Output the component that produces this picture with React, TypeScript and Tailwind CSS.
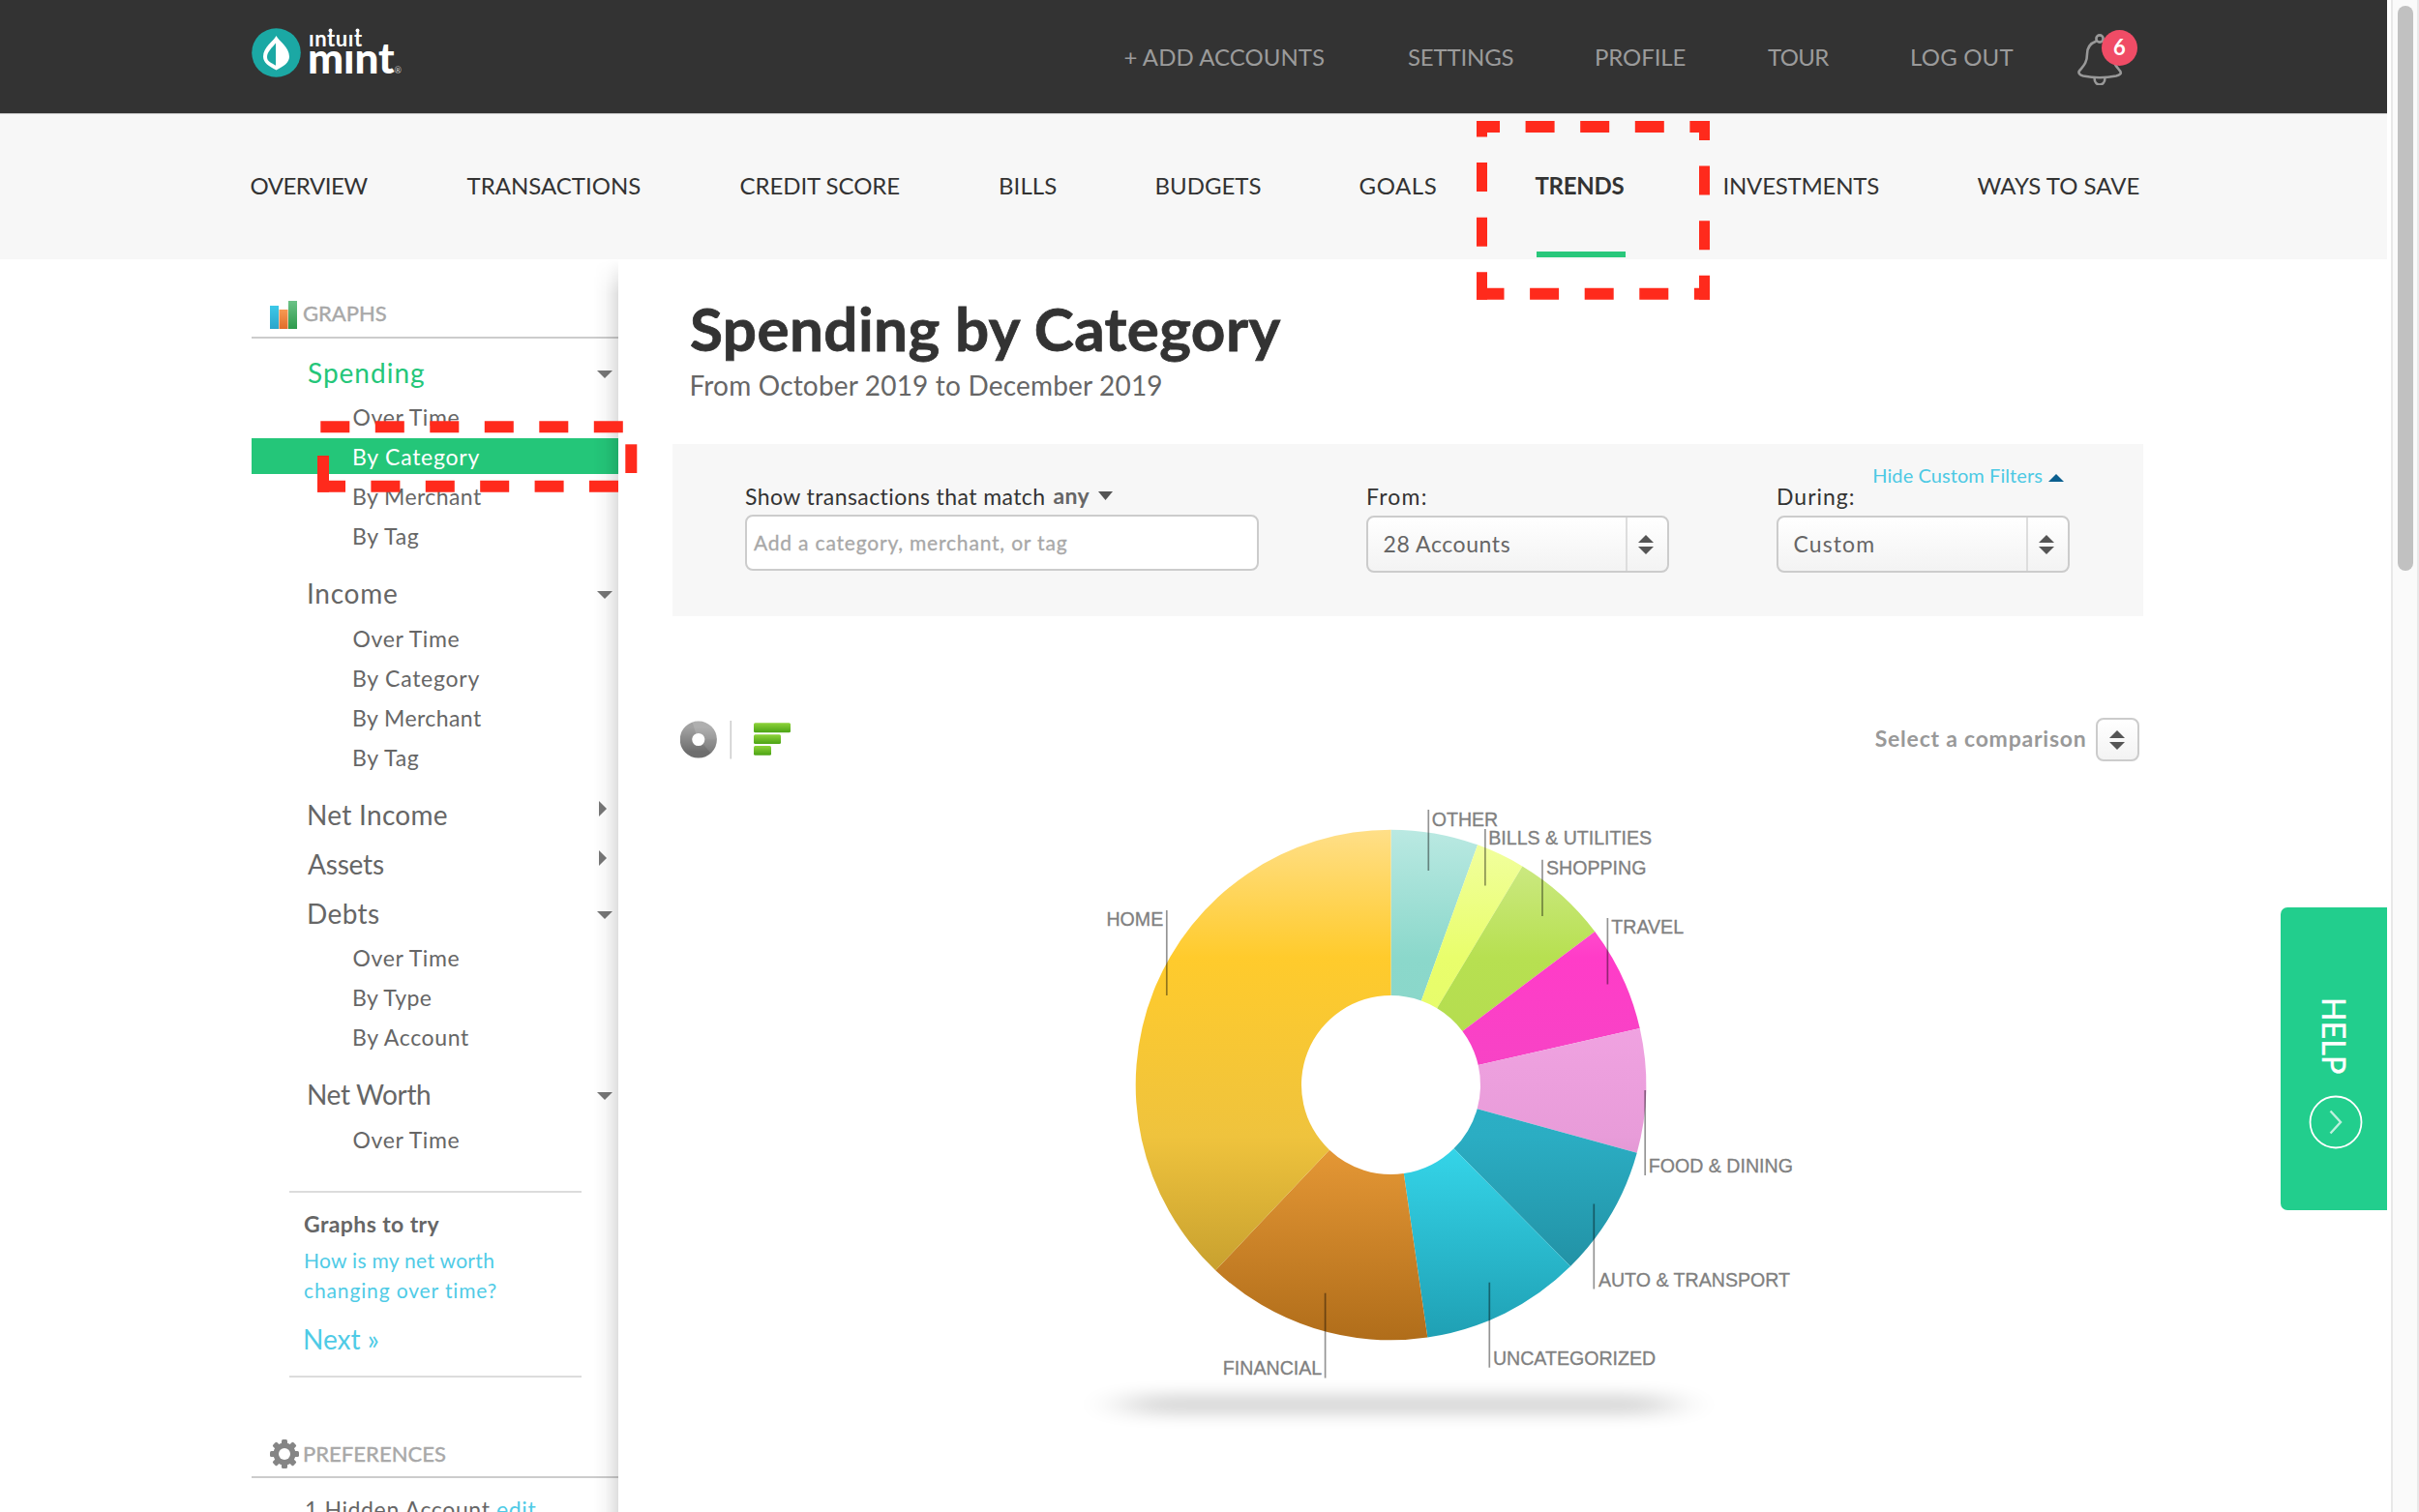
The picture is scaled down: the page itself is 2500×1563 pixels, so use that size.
interface NavItem {
  label: string
  className: string
}

interface SidebarItem {
  label: string
  className: string
  active?: boolean
}

interface SidebarGroup {
  label: string
  className: string
  open: boolean
  active?: boolean
  items: SidebarItem[]
}

interface Slice {
  label: string
  from: number
  to: number
  stops: [string, string, string, string]
  line: [number, number, number]
  text: [number, number]
  anchor: 'start' | 'end'
}

const topLinks: NavItem[] = [
  { label: '+ ADD ACCOUNTS', className: 'w-[293.5px] tracking-[0.05px]' },
  { label: 'SETTINGS', className: 'w-[193px] tracking-[-0.19px]' },
  { label: 'PROFILE', className: 'w-[179px] tracking-[-0.1px]' },
  { label: 'TOUR', className: 'w-[147px] tracking-[-0.7px]' },
  { label: 'LOG OUT', className: 'w-[172px] tracking-[0.2px]' },
]

const tabs: NavItem[] = [
  { label: 'OVERVIEW', className: 'w-[224px] tracking-[-0.5px]' },
  { label: 'TRANSACTIONS', className: 'w-[282px]' },
  { label: 'CREDIT SCORE', className: 'w-[267.5px] tracking-[-0.06px]' },
  { label: 'BILLS', className: 'w-[161.5px] tracking-[0.1px]' },
  { label: 'BUDGETS', className: 'w-[211px]' },
  { label: 'GOALS', className: 'w-[182px] tracking-[0.6px]' },
  { label: 'TRENDS', className: 'w-[194px] tracking-[-0.3px] font-bold' },
  { label: 'INVESTMENTS', className: 'w-[263px] tracking-[-0.22px]' },
  { label: 'WAYS TO SAVE', className: 'w-[168px]' },
]

const overTime: SidebarItem = { label: 'Over Time', className: 'tracking-[0.62px] pl-[104.5px]' }
const byCategory: SidebarItem = { label: 'By Category', className: 'tracking-[0.75px] pl-[104px]' }
const byMerchant: SidebarItem = { label: 'By Merchant', className: 'tracking-[0.42px] pl-[104px]' }
const byTag: SidebarItem = { label: 'By Tag', className: 'tracking-[0.66px] pl-[104px]' }

const groups: SidebarGroup[] = [
  {
    label: 'Spending',
    className: 'tracking-[1px] pl-[58px]',
    open: true,
    active: true,
    items: [overTime, { ...byCategory, active: true }, byMerchant, byTag],
  },
  { label: 'Income', className: 'tracking-[0.74px] pl-[57px]', open: true, items: [overTime, byCategory, byMerchant, byTag] },
  { label: 'Net Income', className: 'tracking-[0.3px] pl-[57px]', open: false, items: [] },
  { label: 'Assets', className: 'tracking-[-0.2px] pl-[58px]', open: false, items: [] },
  {
    label: 'Debts',
    className: 'tracking-[0.4px] pl-[57px]',
    open: true,
    items: [
      overTime,
      { label: 'By Type', className: 'tracking-[0.39px] pl-[104px]' },
      { label: 'By Account', className: 'tracking-[0.62px] pl-[104px]' },
    ],
  },
  { label: 'Net Worth', className: 'tracking-[-0.36px] pl-[57px]', open: true, items: [overTime] },
]

// Angles in degrees, clockwise from twelve o'clock. Stops sit at 0, 25, 60 and 100% of the height.
const slices: Slice[] = [
  { label: 'OTHER', from: 0, to: 19.85, stops: ['#bae9e2', '#8bd8cb', '#88d4c7', '#5f9a90'], line: [38.8, -284.5, -221.5], text: [42.2, -268], anchor: 'start' },
  { label: 'BILLS & UTILITIES', from: 19.85, to: 31, stops: ['#f2ffa4', '#e9fe6c', '#e3f868', '#a5b548'], line: [97.4, -264.5, -206], text: [100.8, -248.2], anchor: 'start' },
  { label: 'SHOPPING', from: 31, to: 53.05, stops: ['#d3ec93', '#b7e051', '#b2d94e', '#80a037'], line: [156.5, -232.8, -174.5], text: [160.5, -217.3], anchor: 'start' },
  { label: 'TRAVEL', from: 53.05, to: 77.2, stops: ['#ff80dc', '#ff3cc8', '#f248c4', '#b03090'], line: [223.9, -172.5, -104], text: [227.8, -156.5], anchor: 'start' },
  { label: 'FOOD & DINING', from: 77.2, to: 105.45, stops: ['#f8c4ee', '#f5a6e6', '#e89cd9', '#b074a4'], line: [262.7, 5.5, 93.5], text: [266.3, 90.5], anchor: 'start' },
  { label: 'AUTO & TRANSPORT', from: 105.45, to: 135.3, stops: ['#7accdb', '#30b6cd', '#2badc3', '#1d8395'], line: [209.8, 123, 211], text: [214.4, 208], anchor: 'start' },
  { label: 'UNCATEGORIZED', from: 135.3, to: 171.75, stops: ['#8aecf7', '#3ce2f6', '#36d8ec', '#1f9fb3'], line: [101.8, 204.2, 292.2], text: [105.4, 289], anchor: 'start' },
  { label: 'FINANCIAL', from: 171.75, to: 223.4, stops: ['#fac68a', '#f5a540', '#e89a37', '#b06d1a'], line: [-67.9, 215.2, 303], text: [-71.3, 299.8], anchor: 'end' },
  { label: 'HOME', from: 223.4, to: 360, stops: ['#ffdf88', '#ffcb2c', '#efc33d', '#b48f28'], line: [-231.7, -180.5, -92.5], text: [-235.3, -164.5], anchor: 'end' },
]

const OUTER = 263.8
const INNER = 92.5

function point(radius: number, angle: number): string {
  const rad = (angle * Math.PI) / 180
  return `${(radius * Math.sin(rad)).toFixed(2)} ${(-radius * Math.cos(rad)).toFixed(2)}`
}

function slicePath(from: number, to: number): string {
  return `M${point(OUTER, from)} A${OUTER} ${OUTER} 0 0 1 ${point(OUTER, to)} L${point(INNER, to)} A${INNER} ${INNER} 0 0 0 ${point(INNER, from)} Z`
}

function Logo() {
  return (
    <div className="mb-[9px] flex h-[56px] items-start text-white" aria-label="Intuit Mint">
      <svg width="51" height="51" viewBox="0 0 51 51" className="mt-[3px]">
        <circle cx="25.5" cy="25.5" r="25.3" fill="#1ba8a4" />
        <path d="M25.5 8 C28 13 39 20 39 29.5 C39 36 33 39.5 25.5 43.5 C18 39.5 12 36 12 29.5 C12 20 23 13 25.5 8Z" fill="#fff" />
        <path d="M25 15.5 C21.5 20 16 24.5 16 30 C16 34.5 20.5 36 25 38.7Z" fill="#1ba8a4" />
      </svg>
      <div className="relative ml-[7px] flex flex-col pt-[4px]">
        <span className="h-[20px] pl-[1px] text-[22px] leading-[20px] font-bold tracking-[0.6px]">ıntuıt</span>
        <span className="-mt-[9px] h-[36px] text-[44px] leading-[36px] font-black tracking-[-0.1px]">mınt</span>
        <svg width="60" height="6" viewBox="0 0 60 6" className="absolute top-[3px] left-0">
          <circle cx="23.5" cy="2.5" r="2" fill="#fff" />
          <circle cx="51.5" cy="2.5" r="2" fill="#fff" />
        </svg>
      </div>
      <span className="mt-[42px] text-[9px] leading-[10px] text-[#ccc]">®</span>
    </div>
  )
}

function Bell() {
  return (
    <div className="relative top-[1.5px] h-[56px] w-[64px]">
      <svg width="64" height="56" viewBox="0 0 64 56" fill="none" stroke="#999" strokeWidth="2.6" className="absolute inset-0">
        <circle cx="24" cy="8" r="3.6" />
        <path d="M20.5 10.5 C13.5 13 11 18 11 24 C11 34 6 37 2.5 42 C2 44.5 3.5 45.5 7 46.5 C17 48.5 31 48.5 41 46.5 C45 45.5 46.5 44 45.5 42 C42 37 37.5 34 37 24 C37 18 34.5 13 27.5 10.5" />
        <path d="M18.5 48 C18.5 58 29.5 58 29.5 48" />
      </svg>
      <span className="absolute top-[-1.5px] left-[26px] flex size-[37px] items-center justify-center rounded-full bg-[#f04c66] text-[22px] leading-none font-bold text-white">
        6
      </span>
    </div>
  )
}

function TopBar() {
  return (
    <header className="flex h-[118px] items-center justify-between border-b border-[#c8c8c8] bg-[#333] pr-[257px] pl-[260px]">
      <Logo />
      <nav className="flex items-center text-[24px] text-[#9b9b9b]">
        {topLinks.map((link) => (
          <a key={link.label} className={`pt-[1px] whitespace-nowrap ${link.className}`}>
            {link.label}
          </a>
        ))}
        <Bell />
      </nav>
    </header>
  )
}

function Tabs() {
  return (
    <nav className="flex h-[149.5px] items-center bg-[#f7f7f7] pl-[258.5px] text-[24px] text-[#333]">
      {tabs.map((tab) => (
        <a key={tab.label} className={`relative flex h-full items-center pb-[1px] whitespace-nowrap ${tab.className}`}>
          {tab.label}
          {tab.label === 'TRENDS' ? <span className="absolute bottom-[1.5px] left-[1.5px] h-[6px] w-[92px] bg-[#29c77b]" /> : null}
        </a>
      ))}
    </nav>
  )
}

function GroupArrow({ open }: { open: boolean }) {
  return open ? (
    <svg width="16" height="8" viewBox="0 0 16 8" className="mt-[4px] mr-[6px]">
      <path d="M0 0H16L8 8Z" fill="#777" />
    </svg>
  ) : (
    <svg width="8" height="16" viewBox="0 0 8 16" className="mr-[12px] mb-[11px]">
      <path d="M0 0V16L8 8Z" fill="#777" />
    </svg>
  )
}

function Sidebar() {
  return (
    <aside className="relative w-[379px] shrink-0">
      <div className="flex h-[82px] items-end border-b-2 border-[#ccc] pb-[8px] pl-[19px]">
        <svg width="28" height="30" viewBox="0 0 28 30">
          <defs>
            <linearGradient id="bar-blue" x1="0" y1="0" x2="0" y2="1">
              <stop stopColor="#3cc8e8" />
              <stop offset="1" stopColor="#2ba5cb" />
            </linearGradient>
            <linearGradient id="bar-orange" x1="0" y1="0" x2="0" y2="1">
              <stop stopColor="#f79a52" />
              <stop offset="1" stopColor="#e06d2b" />
            </linearGradient>
            <linearGradient id="bar-green" x1="0" y1="0" x2="0" y2="1">
              <stop stopColor="#6cc287" />
              <stop offset="1" stopColor="#2d9a4c" />
            </linearGradient>
          </defs>
          <rect x="0" y="6" width="9" height="24" fill="url(#bar-blue)" />
          <rect x="9.5" y="10" width="9" height="20" fill="url(#bar-orange)" />
          <rect x="19" y="1" width="9" height="29" fill="url(#bar-green)" />
        </svg>
        <h3 className="pl-[6px] text-[22px] leading-[32px] text-[#a8a8a8] [-webkit-text-stroke:0.4px_#a8a8a8]">GRAPHS</h3>
      </div>

      <div className="pt-[9.5px] text-[#666]">
        {groups.map((group) => (
          <section key={group.label}>
            <div className="flex h-[51px] items-center justify-between text-[28px]">
              <span className={`${group.className} ${group.active ? 'text-[#24c679]' : ''}`}>{group.label}</span>
              <GroupArrow open={group.open} />
            </div>
            {group.items.length > 0 ? (
              <ul className="pb-[13.5px] text-[23px]">
                {group.items.map((item) => (
                  <li key={item.label} className="flex h-[41px] items-center">
                    <span className={`h-[37px] w-full leading-[38px] ${item.className} ${item.active ? 'bg-[#24c679] text-white' : ''}`}>
                      {item.label}
                    </span>
                  </li>
                ))}
              </ul>
            ) : null}
          </section>
        ))}
      </div>

      <div className="mt-[20px] ml-[39px] w-[302px] border-y-2 border-[#dcdcdc] pt-[16px] pb-[18px] pl-[15px] whitespace-nowrap">
        <p className="text-[23px] leading-[32px] font-bold tracking-[0.4px] text-[#666]">Graphs to try</p>
        <p className="mt-[6px] text-[21px] leading-[31px] text-[#4fcbe6]">
          <span className="block tracking-[0.3px]">How is my net worth</span>
          <span className="block tracking-[0.87px]">changing over time?</span>
        </p>
        <p className="mt-[15px] -ml-[1px] text-[28px] leading-[40px] text-[#4fcbe6]">Next »</p>
      </div>

      <div className="mt-[22px] flex h-[82px] items-end border-b-2 border-[#ccc] pb-[7px] pl-[19px]">
        <svg width="30" height="32" viewBox="-15 -16 30 32" fill="#858585">
          {[0, 45, 90, 135].map((angle) => (
            <rect key={angle} x="-3" y="-15" width="6" height="30" rx="1.5" transform={`rotate(${angle})`} />
          ))}
          <circle r="11.5" />
          <circle r="6" fill="#fff" />
        </svg>
        <h3 className="pl-[4px] text-[22px] leading-[33px] tracking-[0.05px] text-[#a8a8a8] [-webkit-text-stroke:0.4px_#a8a8a8]">PREFERENCES</h3>
      </div>
      <p className="mt-[12px] pl-[55px] text-[23px] leading-[40px] tracking-[0.62px] whitespace-nowrap text-[#666]">
        1 Hidden Account <span className="text-[#4fcbe6]">edit</span>
      </p>

      {/* Shadow that the content panel throws on the sidebar */}
      <div className="pointer-events-none absolute top-0 right-0 h-full w-[26px] bg-gradient-to-r from-transparent via-black/3 to-black/13 [mask-image:linear-gradient(to_bottom,transparent,black_36px)]" />
    </aside>
  )
}

function Stepper() {
  return (
    <svg width="16" height="20" viewBox="0 0 16 20" fill="#555">
      <path d="M8 0L16 8H0Z" />
      <path d="M0 12H16L8 20Z" />
    </svg>
  )
}

function Select({ value, className }: { value: string; className: string }) {
  return (
    <div className={`mt-[4.5px] flex h-[59px] items-stretch rounded-[8px] border-2 border-[#ccc] bg-gradient-to-b from-white to-[#f3f3f3] ${className}`}>
      <span className="flex flex-1 items-center pb-[2px] pl-[15.5px] text-[23px] text-[#666]">{value}</span>
      <span className="flex w-[43px] items-center justify-center border-l-2 border-[#ddd] pr-[3px]">
        <Stepper />
      </span>
    </div>
  )
}

function Filters() {
  return (
    <section className="relative mt-[41.5px] flex h-[178px] w-[1520px] bg-[#f7f7f7] pt-[37.5px] pl-[75px] text-[23px] leading-[32px] text-[#333]">
      <div className="w-[531px]">
        <div className="flex h-[32px] items-center">
          <span className="tracking-[0.42px]">Show transactions that match</span>
          <span className="mb-[2px] ml-[8px] font-bold tracking-[0.4px] text-[#666]">any</span>
          <svg width="15" height="9" viewBox="0 0 15 9" className="ml-[9px]">
            <path d="M0 0H15L7.5 9Z" fill="#555" />
          </svg>
        </div>
        <div className="mt-[3px] flex h-[58px] items-center rounded-[8px] border-2 border-[#ccc] bg-white pl-[7px] text-[21px] tracking-[0.81px] text-[#a8a8a8] [-webkit-text-stroke:0.3px_#a8a8a8]">
          Add a category, merchant, or tag
        </div>
      </div>
      <div className="ml-[111px]">
        <span className="block tracking-[1.2px]">From:</span>
        <Select value="28 Accounts" className="w-[313px] tracking-[0.58px]" />
      </div>
      <div className="ml-[111px]">
        <span className="block tracking-[1px]">During:</span>
        <Select value="Custom" className="w-[303px] tracking-[1.1px]" />
      </div>
      <a className="absolute top-[21.5px] right-[82px] flex items-center text-[20px] leading-[20px] tracking-[0.08px] text-[#4cc9e4]">
        Hide Custom Filters
        <svg width="16" height="8" viewBox="0 0 16 8" className="mt-[6px] ml-[6px]">
          <path d="M8 0L16 8H0Z" fill="#0b5f8f" />
        </svg>
      </a>
    </section>
  )
}

function Toolbar() {
  return (
    <div className="mt-[105px] flex h-[45px] w-[1520px] items-center pr-[4.5px] pl-[8px]">
      <svg width="115" height="40" viewBox="0 0 115 40">
        <defs>
          <linearGradient id="donut-gray" x1="0" y1="0" x2="0" y2="1">
            <stop stopColor="#a2a2a2" />
            <stop offset="1" stopColor="#6e6e6e" />
          </linearGradient>
          <linearGradient id="bar-lime" x1="0" y1="0" x2="0" y2="1">
            <stop stopColor="#8ed33a" />
            <stop offset="1" stopColor="#4ba314" />
          </linearGradient>
        </defs>
        <circle cx="18.8" cy="19.5" r="12.8" fill="none" stroke="url(#donut-gray)" strokeWidth="12.5" />
        <path d="M18.8 13.5 A6 6 0 0 1 24.8 19.5 L37.8 19.5 A19 19 0 0 0 12.5 1.6 L16.5 13.9Z" fill="#fff" opacity="0.14" />
        <path d="M24.8 19.5H37.8A19 19 0 0 1 31.5 33.5L23.2 23.8Z" fill="#fff" opacity="0.1" />
        <rect x="51.5" y="0" width="1.5" height="39.5" fill="#ccc" />
        <rect x="76" y="2.3" width="38" height="10" rx="1.5" fill="url(#bar-lime)" />
        <rect x="76" y="14.3" width="28" height="9.8" rx="1.5" fill="url(#bar-lime)" />
        <rect x="76" y="26" width="18" height="9.8" rx="1.5" fill="url(#bar-lime)" />
      </svg>
      <span className="mb-[3px] ml-auto text-[23px] font-bold tracking-[0.77px] text-[#999]">Select a comparison</span>
      <span className="ml-[9px] flex h-[45px] w-[45px] items-center justify-center rounded-[8px] border-2 border-[#ccc] bg-gradient-to-b from-white to-[#f3f3f3]">
        <Stepper />
      </span>
    </div>
  )
}

function SpendingChart() {
  return (
    <svg width="760" height="660" viewBox="-317.5 -301.5 760 660" className="mt-[33px] ml-[425px]">
      <defs>
        {slices.map((slice, i) => (
          <linearGradient key={slice.label} id={`slice-${i}`} gradientUnits="userSpaceOnUse" x1="0" y1={-OUTER} x2="0" y2={OUTER}>
            <stop offset="0" stopColor={slice.stops[0]} />
            <stop offset="0.25" stopColor={slice.stops[1]} />
            <stop offset="0.6" stopColor={slice.stops[2]} />
            <stop offset="1" stopColor={slice.stops[3]} />
          </linearGradient>
        ))}
        <filter id="floor-blur" x="-20%" y="-300%" width="140%" height="700%">
          <feGaussianBlur stdDeviation="26 8" />
        </filter>
      </defs>
      <rect x="-274" y="320" width="564" height="21" rx="10" fill="#000" opacity="0.155" filter="url(#floor-blur)" />
      {slices.map((slice, i) => (
        <path key={slice.label} d={slicePath(slice.from, slice.to)} fill={`url(#slice-${i})`} />
      ))}
      {slices.map((slice) => (
        <g key={slice.label}>
          <path d={`M${slice.line[0]} ${slice.line[1]}V${slice.line[2]}`} stroke="#000" strokeOpacity="0.42" strokeWidth="1.7" />
          <text
            x={slice.text[0]}
            y={slice.text[1]}
            textAnchor={slice.anchor}
            fill="#808080"
            stroke="#808080"
            strokeWidth="0.3"
            className="font-['Liberation_Sans',sans-serif] text-[19.6px]"
          >
            {slice.label}
          </text>
        </g>
      ))}
    </svg>
  )
}

function HelpTab() {
  return (
    <button
      type="button"
      className="absolute top-[937.5px] left-[2357px] flex h-[313px] w-[110px] flex-col items-center rounded-l-[7px] bg-[#22ce8d] pt-[92.5px] text-white"
    >
      <span className="h-[81px] text-[32px] leading-[40px] tracking-[0.22px] [-webkit-text-stroke:0.5px_white] [writing-mode:vertical-rl]">HELP</span>
      <svg width="56" height="56" viewBox="0 0 56 56" fill="none" stroke="#fff" className="mt-[21px] ml-[4px]">
        <circle cx="28" cy="28" r="26.5" strokeWidth="1.8" />
        <path d="M22.5 16.5L33 28L22.5 39.5" strokeWidth="2.4" strokeOpacity="0.7" />
      </svg>
    </button>
  )
}

// Dashed markers round the Trends tab and the selected report
function Highlights() {
  return (
    <>
      <svg width="241" height="185" viewBox="0 0 241 185" className="pointer-events-none absolute top-[125px] left-[1526px]" stroke="#ff2a1c" strokeDasharray="30 26.6">
        <path d="M0 6H241" strokeWidth="12" strokeDashoffset="6" />
        <path d="M0 178.7H241" strokeWidth="12" strokeDashoffset="1.5" />
        <path d="M5.5 0V184.7" strokeWidth="11" strokeDashoffset="13.5" />
        <path d="M235.5 0V184.7" strokeWidth="11" strokeDashoffset="10" />
      </svg>
      <svg width="331" height="74" viewBox="0 0 331 74" className="pointer-events-none absolute top-[435px] left-[328px]" stroke="#ff2a1c">
        <path d="M3.3 6.2H316" strokeWidth="12" strokeDasharray="30 26.5" />
        <path d="M0 67.8H312" strokeWidth="12" strokeDasharray="30 26.4" strokeDashoffset="1" />
        <path d="M324.3 24.3V54" strokeWidth="12" />
        <path d="M6 36V73.7" strokeWidth="12" />
      </svg>
    </>
  )
}

export default function App() {
  return (
    <div className="relative flex h-[1563px] w-[2500px] overflow-hidden bg-white font-['Lato','Open_Sans',sans-serif]">
      <div className="h-[1563px] w-[2467px] overflow-hidden">
        <TopBar />
        <Tabs />
        <div className="flex pl-[260px]">
          <Sidebar />
          <main className="pt-[39.5px] pl-[56px]">
            <h1 className="pl-[18px] text-[62px] leading-[64px] font-bold tracking-[0.4px] text-[#333] [-webkit-text-stroke:0.8px_#333]">Spending by Category</h1>
            <p className="mt-[6.5px] pl-[17.5px] text-[28px] leading-[40px] tracking-[0.18px] text-[#666]">From October 2019 to December 2019</p>
            <Filters />
            <Toolbar />
            <SpendingChart />
          </main>
        </div>
      </div>

      {/* Scrollbar */}
      <div className="ml-[4px] h-full w-[29px] border-x-2 border-[#e8e8e8] bg-[#fafafa] pt-[6px] pl-[5px]">
        <div className="h-[584px] w-[16px] rounded-full bg-[#c1c1c1]" />
      </div>

      <HelpTab />
      <Highlights />
    </div>
  )
}
